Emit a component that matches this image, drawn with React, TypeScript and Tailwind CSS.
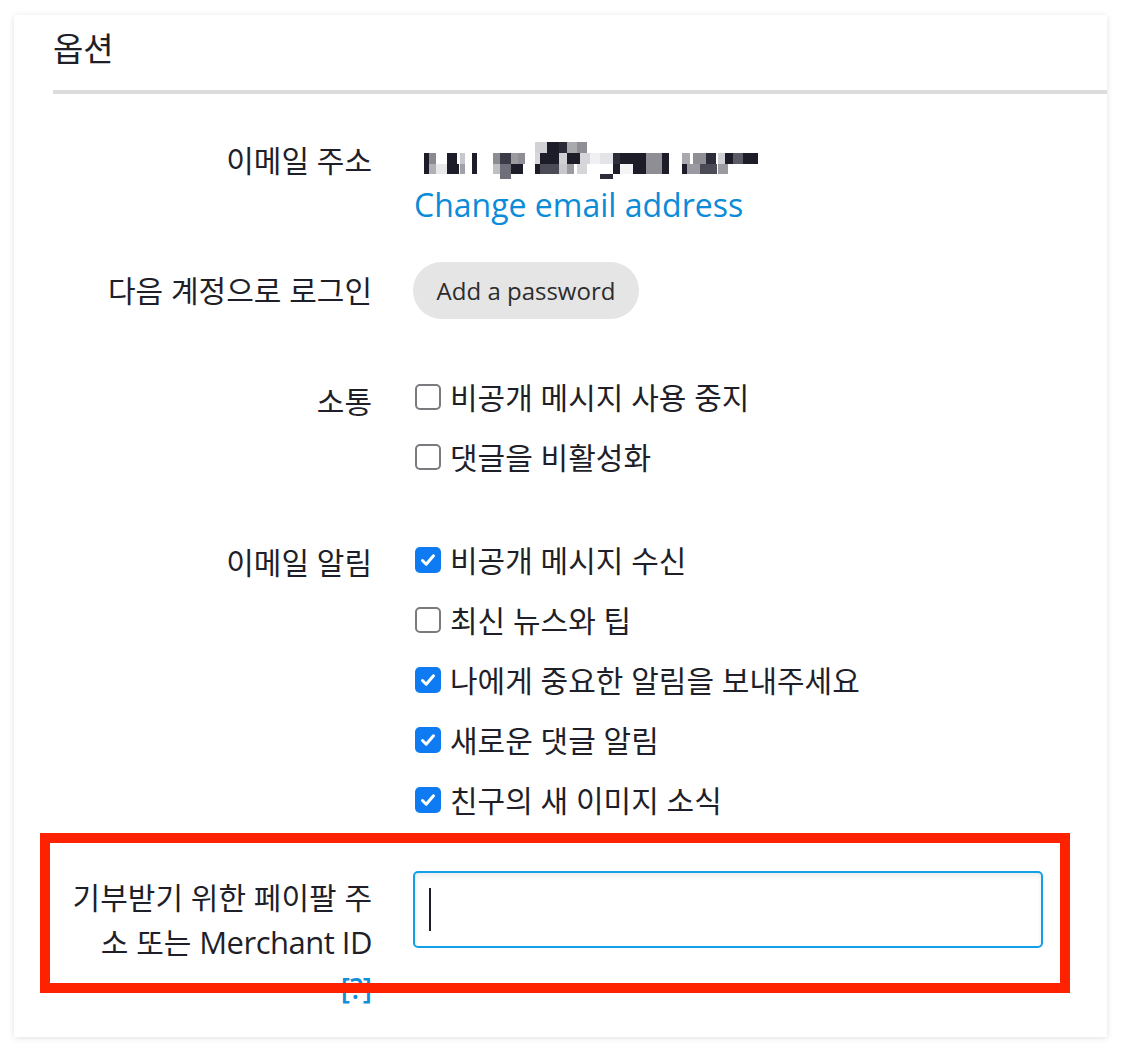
import React from 'react';

const FONT = '"Open Sans", "Noto Sans CJK KR", sans-serif';

// mosaic blocks standing in for the blurred email address
const mosaic: [number, number, number, number, string][] = [
  [115, 4, 12, 11, '#d2d2d6'], [127, 4, 12, 11, '#1c1d28'], [139, 4, 8, 11, '#2a2b36'],
  [147, 4, 10, 11, '#a9a9ae'], [157, 4, 10, 11, '#8e8e94'],
  [4, 15, 5, 11, '#1c1d28'], [9, 15, 7, 11, '#8a8a90'], [27, 15, 10, 11, '#1c1d28'],
  [40, 15, 5, 11, '#c8c8cc'], [52, 15, 5, 11, '#1c1d28'], [73, 15, 7, 11, '#8c8c92'],
  [80, 15, 11, 11, '#3a3b46'], [91, 15, 7, 11, '#9a9aa0'], [98, 15, 7, 11, '#8e8e94'],
  [115, 15, 5, 11, '#d8d8dc'], [120, 15, 19, 11, '#1c1d28'], [139, 15, 8, 11, '#d0d0d4'],
  [147, 15, 13, 11, '#1c1d28'], [160, 15, 10, 11, '#d6d6da'], [170, 15, 10, 11, '#f0f0f2'],
  [180, 15, 13, 11, '#e4e4e8'],
  [193, 15, 7, 11, '#2c2d38'], [200, 15, 13, 11, '#1c1d28'], [213, 15, 13, 11, '#1c1d28'],
  [226, 15, 16, 11, '#8e8e94'], [242, 15, 7, 11, '#1c1d28'], [262, 15, 8, 11, '#a8a8ae'],
  [273, 15, 13, 11, '#8e8e94'], [286, 15, 10, 11, '#2c2d38'], [298, 15, 7, 11, '#d0d0d4'],
  [305, 15, 8, 11, '#1c1d28'], [313, 15, 10, 11, '#5a5b64'], [323, 15, 15, 11, '#1c1d28'],
  [4, 26, 5, 10, '#1c1d28'], [9, 26, 7, 10, '#b0b0b5'], [16, 26, 11, 10, '#e8e8ea'],
  [27, 26, 12, 10, '#1c1d28'],
  [40, 26, 5, 10, '#a0a0a6'], [52, 26, 5, 10, '#1c1d28'], [73, 26, 7, 10, '#c0c0c4'],
  [80, 26, 11, 10, '#6e6f78'],
  [91, 26, 12, 10, '#1c1d28'], [115, 26, 5, 10, '#1c1d28'], [120, 26, 19, 10, '#4a4b55'],
  [139, 26, 8, 10, '#c8c8cc'], [147, 26, 7, 10, '#9a9aa0'], [157, 26, 10, 10, '#d6d6da'],
  [193, 26, 7, 10, '#1c1d28'], [200, 26, 13, 10, '#f4f4f6'], [213, 26, 13, 10, '#1c1d28'],
  [226, 26, 16, 10, '#8e8e94'],
  [242, 26, 7, 10, '#1c1d28'], [262, 26, 5, 10, '#1c1d28'], [267, 26, 13, 10, '#9a9aa0'],
  [280, 26, 17, 10, '#4a4b55'],
  [298, 26, 10, 10, '#9a9aa0'], [80, 36, 11, 5, '#6e6f78'], [180, 36, 13, 5, '#2c2d38'],
];

const Checkbox = ({ checked }: { checked: boolean }) =>
  checked ? (
    <span className="flex h-[26px] w-[26px] shrink-0 items-center justify-center rounded-[5px] bg-[#0f7bf2]">
      <svg width="18" height="18" viewBox="0 0 18 18" fill="none">
        <path d="M3.5 9.5 L7.2 13.2 L14.5 4.8" stroke="white" strokeWidth="3" strokeLinecap="round" strokeLinejoin="round" />
      </svg>
    </span>
  ) : (
    <span className="h-[26px] w-[26px] shrink-0 rounded-[5px] border-2 border-[#7b7b7f] bg-white" />
  );

const CheckRow = ({ checked, label }: { checked: boolean; label: string }) => (
  <div className="flex h-[60px] items-center gap-[9px]">
    <Checkbox checked={checked} />
    <span className="text-[30px] text-[#1f1f29]">{label}</span>
  </div>
);

const Label = ({ children, className = '' }: { children: React.ReactNode; className?: string }) => (
  <div className={`w-[319px] shrink-0 text-right text-[30px] text-[#1f1f29] ${className}`}>{children}</div>
);

export default function App() {
  return (
    <div className="min-h-[1054px] bg-white pl-[14px] pt-[15px]" style={{ fontFamily: FONT }}>
      <div className="w-[1093px] bg-white pb-[27px] pl-[39px] shadow-[0_1px_6px_rgba(0,0,0,0.12)]">
        {/* Header */}
        <h1 className="pt-[14px] text-[33px] leading-[40px] text-[#1f1f29]">옵션</h1>
        <div className="mt-[21px] h-[4px] bg-[#dcdcdc]" />

        {/* Email */}
        <div className="mt-[42px] flex gap-[42px]">
          <Label className="leading-[50px]">이메일 주소</Label>
          <div className="flex flex-col">
            <div className="flex h-[46px] items-center pl-[6px]">
              <svg width="345" height="42" viewBox="0 0 345 42">
                {mosaic.map(([x, y, w, h, c], i) => (
                  <rect key={i} x={x} y={y} width={w} height={h} fill={c} />
                ))}
              </svg>
            </div>
            <a className="block text-[32px] leading-[46px] text-[#0b8bd8]" href="#">Change email address</a>
          </div>
        </div>

        {/* Login */}
        <div className="mt-[34px] flex items-center gap-[42px]">
          <Label>다음 계정으로 로그인</Label>
          <button className="-ml-[1px] h-[57px] w-[226px] rounded-full bg-[#e5e5e5] text-[24px] text-[#2d2d2d]">
            Add a password
          </button>
        </div>

        {/* Communication */}
        <div className="mt-[48px] flex gap-[42px]">
          <Label className="leading-[70px]">소통</Label>
          <div className="pl-[1px]">
            <CheckRow checked={false} label="비공개 메시지 사용 중지" />
            <CheckRow checked={false} label="댓글을 비활성화" />
          </div>
        </div>

        {/* Email notifications */}
        <div className="mt-[43px] flex gap-[42px]">
          <Label className="leading-[66px]">이메일 알림</Label>
          <div className="pl-[1px]">
            <CheckRow checked={true} label="비공개 메시지 수신" />
            <CheckRow checked={false} label="최신 뉴스와 팁" />
            <CheckRow checked={true} label="나에게 중요한 알림을 보내주세요" />
            <CheckRow checked={true} label="새로운 댓글 알림" />
            <CheckRow checked={true} label="친구의 새 이미지 소식" />
          </div>
        </div>

        {/* PayPal */}
        <div className="relative mt-[41px] flex gap-[42px]">
          <Label className="pt-[4px] leading-[45px]">
            <div>
              기부받기 위한 페이팔 주<br />소 또는 <span className="text-[31px] tracking-[-0.5px]">Merchant ID</span>
            </div>
            <a href="#" className="text-[28px] font-semibold leading-[44px] text-[#128fd8]">[?]</a>
          </Label>
          <div className="-ml-[1px] flex h-[77px] w-[630px] items-center rounded-[5px] border-2 border-[#12a0e6] pl-[14px] shadow-[inset_0_3px_5px_rgba(0,0,0,0.07)]">
            <span className="h-[43px] w-[2px] bg-[#1f1f29]" />
          </div>
          {/* annotation box */}
          <div className="pointer-events-none absolute left-[-13px] top-[-38px] h-[160px] w-[1030px] border-[10px] border-[#ff2200]" />
        </div>
      </div>
    </div>
  );
}
